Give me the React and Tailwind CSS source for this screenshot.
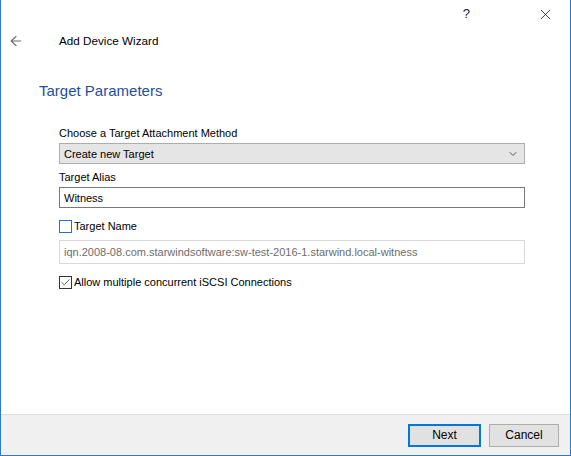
import { ArrowLeft, X, ChevronDown, Check } from 'lucide-react';

const font = { fontFamily: '"Segoe UI", "Liberation Sans", Arial, sans-serif' };

function Checkbox({ checked, active }) {
  return (
    <span
      className={`flex h-[13px] w-[13px] items-center justify-center border bg-white ${
        active ? 'border-[#1c73c9]' : 'border-[#333333]'
      }`}
    >
      {checked && <Check size={11} strokeWidth={1.6} className="text-[#222]" />}
    </span>
  );
}

export default function App() {
  return (
    <div
      className="flex h-[456px] w-[571px] flex-col border border-t-0 border-[#2b7bc7] bg-white text-[11px] leading-[16px] text-black"
      style={font}
    >
      {/* Title bar */}
      <div className="flex h-[28px] items-center justify-end pr-[16px]">
        <span className="mr-[67px] text-[13px] text-[#222]">?</span>
        <X size={17} strokeWidth={1.1} className="text-[#111]" />
      </div>

      {/* Header */}
      <div className="flex h-[26px] items-center">
        <ArrowLeft size={16} strokeWidth={1.8} className="ml-[7px] text-[#6a6a6a]" />
        <span className="ml-[35px] text-[11.7px]">Add Device Wizard</span>
      </div>

      <div className="flex-1 pl-[38px] pr-[45px] pt-[26px]">
        <h1 className="text-[15px] leading-[22px] text-[#1f4ea1]">Target Parameters</h1>

        <div className="mt-[23px] pl-[20px]">
          <div>Choose a Target Attachment Method</div>
          <div className="mt-[2px] flex h-[21px] items-center justify-between border border-[#adadad] bg-[#e5e5e5] px-[4px]">
            <span>Create new Target</span>
            <ChevronDown size={12} strokeWidth={1.6} className="mr-[1px] text-[#333]" />
          </div>

          <div className="mt-[5px]">Target Alias</div>
          <div className="mt-[2px] flex h-[21px] items-center border border-[#7a7a7a] px-[4px]">
            Witness
          </div>

          <div className="mt-[10px] flex h-[16px] items-center gap-[2px]">
            <Checkbox active />
            <span>Target Name</span>
          </div>
          <div className="mt-[6px] flex h-[24px] items-center border border-[#d9d9d9] px-[4px] text-[#6d6d6d]">
            iqn.2008-08.com.starwindsoftware:sw-test-2016-1.starwind.local-witness
          </div>

          <div className="mt-[10px] flex h-[16px] items-center gap-[2px]">
            <Checkbox checked />
            <span>Allow multiple concurrent iSCSI Connections</span>
          </div>
        </div>
      </div>

      {/* Footer */}
      <div className="flex h-[41px] items-center justify-end gap-[8px] border-t border-[#dfdfdf] bg-[#f0f0f0] pr-[11px] text-[12px]">
        <button className="h-[23px] w-[73px] border-2 border-[#0078d7] bg-[#e1e1e1]">Next</button>
        <button className="h-[23px] w-[70px] border border-[#adadad] bg-[#e1e1e1]">Cancel</button>
      </div>
    </div>
  );
}
